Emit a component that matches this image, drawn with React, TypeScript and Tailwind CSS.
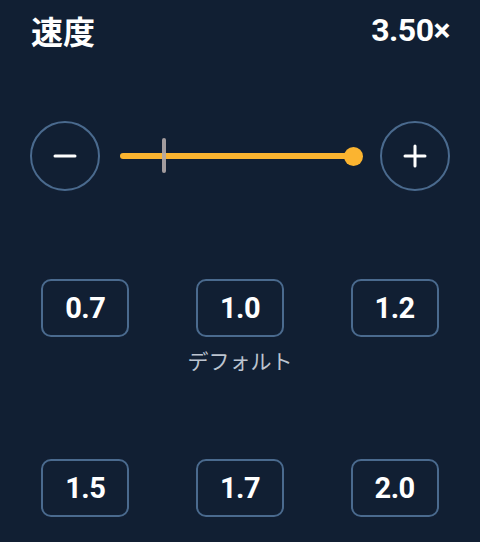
const presetRows: { value: string; label?: string }[][] = [
  [{ value: '0.7' }, { value: '1.0', label: 'デフォルト' }, { value: '1.2' }],
  [{ value: '1.5' }, { value: '1.7' }, { value: '2.0' }],
];

function RoundButton({ kind }: { kind: 'minus' | 'plus' }) {
  return (
    <button
      type="button"
      aria-label={kind === 'minus' ? '遅くする' : '速くする'}
      className="flex h-[70px] w-[70px] shrink-0 items-center justify-center rounded-full border-2 border-[#4a6a8e] text-white"
    >
      <svg width="24" height="24" viewBox="0 0 24 24" fill="none" stroke="currentColor" strokeWidth="3" strokeLinecap="round">
        <line x1="2" y1="12" x2="22" y2="12" />
        {kind === 'plus' ? <line x1="12" y1="2" x2="12" y2="22" /> : null}
      </svg>
    </button>
  );
}

function SpeedSlider() {
  return (
    <div className="relative ml-5 mr-[17px] h-[40px] flex-1">
      <div className="absolute left-0 right-[9px] top-[17px] h-[6px] rounded-full bg-[#fbb430]" />
      <div className="absolute left-[42px] top-[2px] h-[35px] w-[4px] rounded-sm bg-[#b3a9a8]/90" />
      <div className="absolute right-0 top-[10.5px] h-[19px] w-[19px] rounded-full bg-[#fbb430]" />
    </div>
  );
}

export default function App() {
  return (
    <div className="h-[542px] w-[480px] overflow-hidden bg-[#111f33] text-white [font-family:Roboto,'Noto_Sans_CJK_JP',sans-serif]">
      <div className="flex h-[60px] items-center justify-between pl-[31px] pr-[30px]">
        <h1 className="text-[32px] font-bold leading-none [font-family:'Noto_Sans_CJK_JP',sans-serif]">速度</h1>
        <span className="text-[32px] font-bold leading-none tracking-[-0.5px]">3.50×</span>
      </div>

      <div className="mt-[61px] flex items-center px-[30px]">
        <RoundButton kind="minus" />
        <SpeedSlider />
        <RoundButton kind="plus" />
      </div>

      <div className="mt-[88px] flex flex-col gap-[85px] px-2">
        {presetRows.map((row, rowIndex) => (
          <div key={rowIndex} className="grid grid-cols-3 items-start">
            {row.map((preset) => (
              <div key={preset.value} className="flex flex-col items-center">
                <button
                  type="button"
                  className="flex h-[58px] items-center justify-center rounded-[10px] border-2 border-[#4a6a8e] px-[22px] text-[29px] font-bold leading-none tracking-[-0.5px]"
                >
                  {preset.value}
                </button>
                {preset.label ? (
                  <span className="mt-[9px] text-[21px] leading-[28px] text-[#bcc4d0] [font-family:'Noto_Sans_CJK_JP',sans-serif]">
                    {preset.label}
                  </span>
                ) : null}
              </div>
            ))}
          </div>
        ))}
      </div>
    </div>
  );
}
